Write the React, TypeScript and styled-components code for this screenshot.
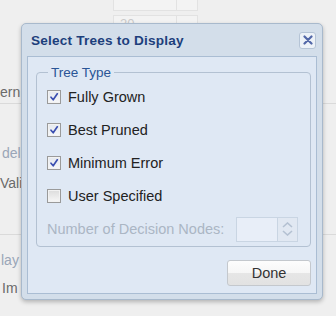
import React from "react";
import styled, { createGlobalStyle } from "styled-components";

const Global = createGlobalStyle`
  html, body { margin: 0; padding: 0; }
  body { background: #efefef; font-family: "Liberation Sans", Arial, sans-serif; }
  #root { width: 336px; height: 316px; overflow: hidden; }
`;

const Page = styled.div`
  position: relative;
  width: 336px;
  height: 316px;
  background: #efefef;
  overflow: hidden;
`;

const BgRow = styled.div<{ $h: number; $line?: boolean; $indent?: number }>`
  height: ${(p) => p.$h}px;
  display: flex;
  align-items: center;
  box-sizing: border-box;
  padding-left: ${(p) => p.$indent ?? 0}px;
  border-bottom: ${(p) => (p.$line ? "1px solid #dadada" : "none")};
`;

const BgLabel = styled.span<{ $muted?: boolean }>`
  font-size: 14px;
  color: ${(p) => (p.$muted ? "#9aa6b8" : "#6a6a6a")};
  white-space: nowrap;
`;

const BgSpin = styled.div<{ $shift?: number }>`
  margin-left: 113px;
  margin-top: ${(p) => p.$shift ?? 0}px;
  display: flex;
  height: 15px;
`;

const BgSpinBox = styled.div`
  width: 64px;
  border: 1px solid #e2e2e2;
  background: #f3f3f3;
  color: #c9c9c9;
  font-size: 13px;
  padding-left: 6px;
  line-height: 15px;
  box-sizing: border-box;
  overflow: hidden;
`;

const BgSpinArrow = styled.div`
  width: 20px;
  border: 1px solid #e2e2e2;
  border-left: none;
  background: #f3f3f3;
`;

const Dialog = styled.div`
  position: absolute;
  left: 21px;
  top: 23px;
  width: 302px;
  height: 277px;
  box-sizing: border-box;
  background: #d3deea;
  border: 1px solid #a8b9cc;
  border-radius: 5px;
  box-shadow: 0 2px 4px rgba(0, 0, 0, 0.25);
  display: flex;
  flex-direction: column;
  padding: 0 5px 5px 5px;
`;

const TitleBar = styled.div`
  height: 32px;
  display: flex;
  align-items: center;
  justify-content: space-between;
  padding-left: 4px;
`;

const Title = styled.span`
  font-weight: bold;
  font-size: 13.6px;
  color: #1d3f7c;
  letter-spacing: 0.2px;
`;

const CloseBtn = styled.div`
  width: 17px;
  height: 17px;
  box-sizing: border-box;
  border: 1px solid #b5c4d6;
  border-radius: 3px;
  background: #edf2f8;
  display: flex;
  align-items: center;
  justify-content: center;
  margin-right: 1px;
`;

const Body = styled.div`
  flex: 1;
  background: #dfe8f4;
  border: 1px solid #aabdd3;
  display: flex;
  flex-direction: column;
  padding: 8px 5px 6px 8px;
`;

const Fieldset = styled.fieldset`
  margin: 0;
  border: 1px solid #b3c1d2;
  border-radius: 4px;
  padding: 0 8px 7px 10px;
  display: flex;
  flex-direction: column;
  height: 182px;
  box-sizing: border-box;
`;

const Legend = styled.legend`
  font-size: 13.5px;
  color: #2a5596;
  padding: 0 3px;
  margin-left: 1px;
`;

const CheckRow = styled.label`
  display: flex;
  align-items: center;
  height: 33px;
  gap: 7px;
  font-size: 14.5px;
  color: #222;
`;

const Box = styled.span<{ $checked?: boolean }>`
  width: 14px;
  height: 14px;
  box-sizing: border-box;
  border: 1px solid #9a9a9a;
  background: ${(p) => (p.$checked ? "linear-gradient(#e4e8ee, #f6f7f9)" : "linear-gradient(#dcdcdc, #f7f7f7)")};
  box-shadow: inset 0 0 0 1px #f2f2f2;
  display: flex;
  align-items: center;
  justify-content: center;
`;

const NodesRow = styled.div`
  display: flex;
  align-items: center;
  justify-content: space-between;
  height: 34px;
  padding-right: 4px;
`;

const NodesLabel = styled.span`
  font-size: 14.5px;
  color: #abb6c4;
`;

const Spinner = styled.div`
  display: flex;
  height: 25px;
  border: 1px solid #c9d5e3;
  box-sizing: border-box;
`;

const SpinInput = styled.div`
  width: 40px;
  background: #e8eef8;
  border-right: 1px solid #c9d5e3;
`;

const SpinArrows = styled.div`
  width: 19px;
  background: #e1e8f2;
  display: flex;
  flex-direction: column;
  align-items: center;
  justify-content: center;
  gap: 2px;
`;

const Footer = styled.div`
  flex: 1;
  display: flex;
  justify-content: flex-end;
  align-items: flex-start;
  padding-top: 13px;
`;

const DoneBtn = styled.button`
  width: 84px;
  height: 26px;
  border: 1px solid #c4c8cd;
  border-radius: 3px;
  background: linear-gradient(#fdfdfd 0%, #f6f6f6 50%, #e6e6e6 51%, #e2e2e2 100%);
  font-family: "Liberation Sans", Arial, sans-serif;
  font-size: 14.5px;
  color: #333;
  padding: 0;
`;

const Check = () => (
  <svg width="10" height="10" viewBox="0 0 10 10">
    <path d="M2 5.2 L4.2 7.8 L8.3 1.8" stroke="#3b4fb0" strokeWidth="1.7" fill="none" strokeLinecap="round" strokeLinejoin="round" />
  </svg>
);

const Chevron = ({ up }: { up?: boolean }) => (
  <svg width="11" height="6" viewBox="0 0 11 6">
    <path d={up ? "M1 5 L5.5 1 L10 5" : "M1 1 L5.5 5 L10 1"} stroke="#b4c1d2" strokeWidth="1.6" fill="none" />
  </svg>
);

const items: { label: string; checked: boolean }[] = [
  { label: "Fully Grown", checked: true },
  { label: "Best Pruned", checked: true },
  { label: "Minimum Error", checked: true },
  { label: "User Specified", checked: false },
];

export default function App() {
  return (
    <Page>
      <Global />
      <BgRow $h={14}>
        <BgSpin $shift={-8}>
          <BgSpinBox />
          <BgSpinArrow />
        </BgSpin>
      </BgRow>
      <BgRow $h={16}>
        <BgSpin>
          <BgSpinBox>20</BgSpinBox>
          <BgSpinArrow />
        </BgSpin>
      </BgRow>
      <BgRow $h={50} />
      <BgRow $h={24} $line>
        <BgLabel>ern</BgLabel>
      </BgRow>
      <BgRow $h={36} />
      <BgRow $h={25} $indent={2}>
        <BgLabel $muted>del</BgLabel>
      </BgRow>
      <BgRow $h={35}>
        <BgLabel>Vali</BgLabel>
      </BgRow>
      <BgRow $h={35} $line />
      <BgRow $h={13} />
      <BgRow $h={24} $indent={1}>
        <BgLabel $muted>lay</BgLabel>
      </BgRow>
      <BgRow $h={4} />
      <BgRow $h={24} $indent={2}>
        <BgLabel>Im</BgLabel>
      </BgRow>

      <Dialog>
        <TitleBar>
          <Title>Select Trees to Display</Title>
          <CloseBtn>
            <svg width="10" height="10" viewBox="0 0 10 10">
              <path d="M1.5 1.5 L8.5 8.5 M8.5 1.5 L1.5 8.5" stroke="#5368a8" strokeWidth="2.2" strokeLinecap="round" />
            </svg>
          </CloseBtn>
        </TitleBar>
        <Body>
          <Fieldset>
            <Legend>Tree Type</Legend>
            {items.map((it) => (
              <CheckRow key={it.label}>
                <Box $checked={it.checked}>{it.checked && <Check />}</Box>
                {it.label}
              </CheckRow>
            ))}
            <NodesRow>
              <NodesLabel>Number of Decision Nodes:</NodesLabel>
              <Spinner>
                <SpinInput />
                <SpinArrows>
                  <Chevron up />
                  <Chevron />
                </SpinArrows>
              </Spinner>
            </NodesRow>
          </Fieldset>
          <Footer>
            <DoneBtn>Done</DoneBtn>
          </Footer>
        </Body>
      </Dialog>
    </Page>
  );
}
